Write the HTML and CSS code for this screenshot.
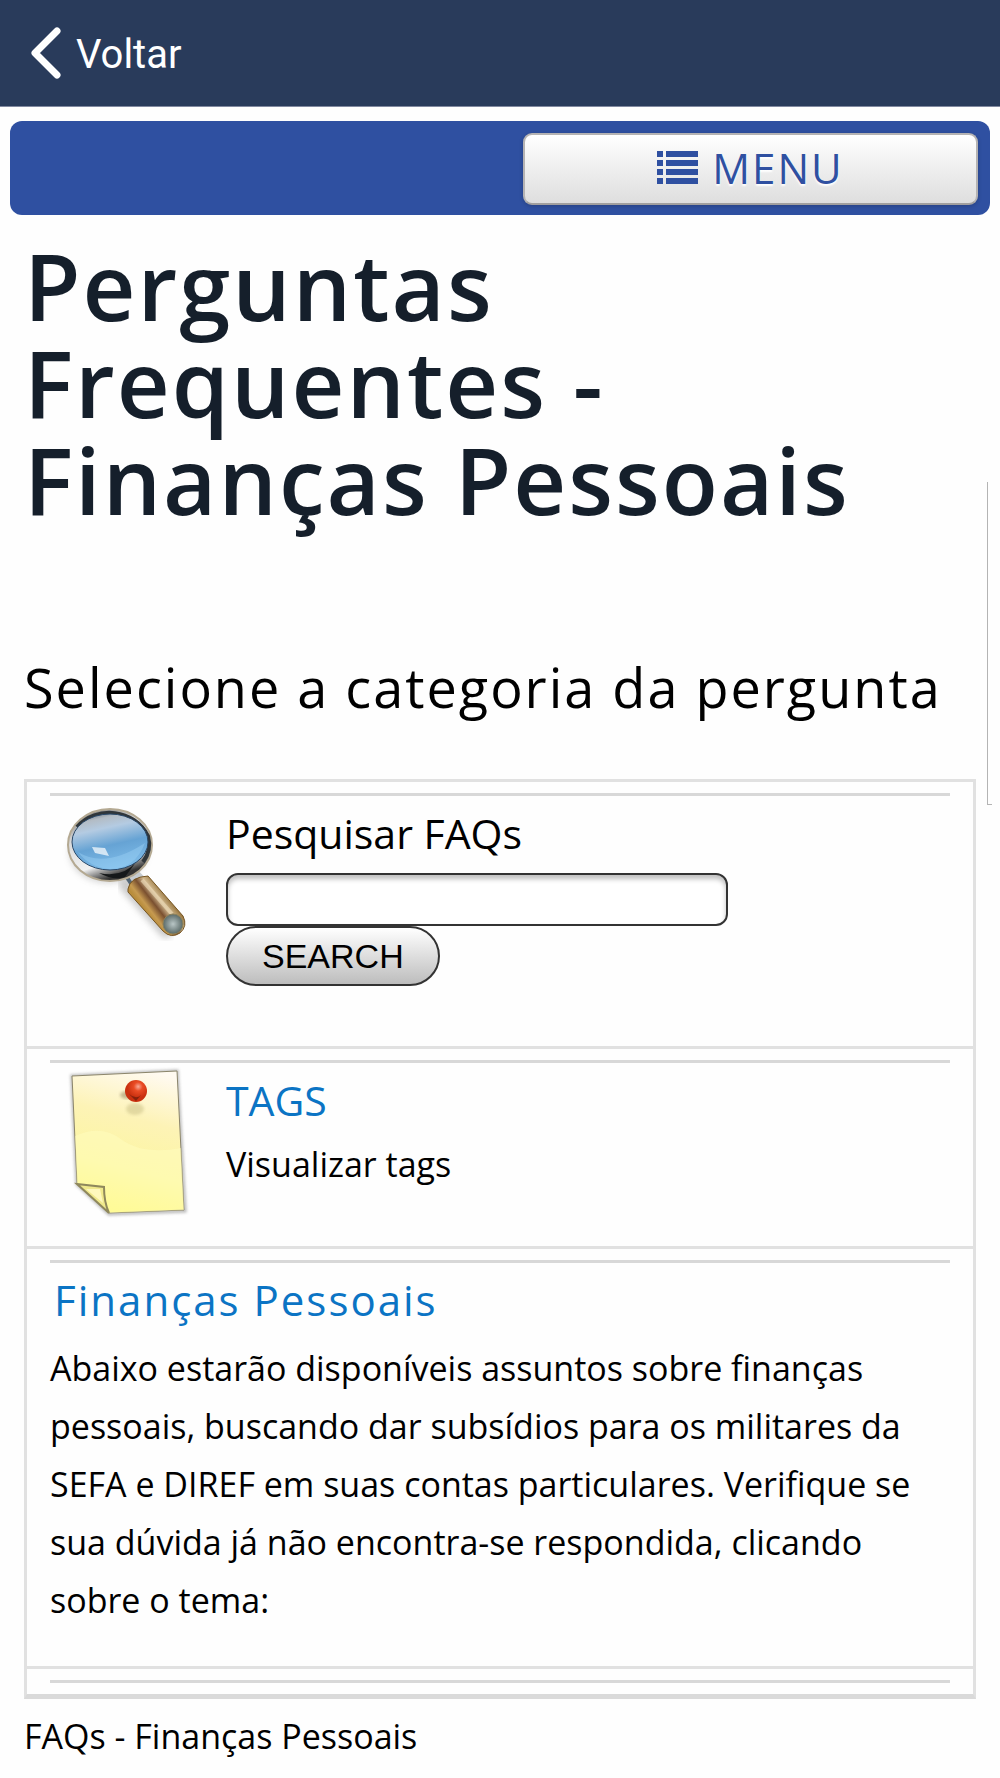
FILE: index.html
```html
<!DOCTYPE html>
<html lang="pt-BR">
<head>
<meta charset="utf-8">
<meta name="viewport" content="width=device-width, initial-scale=1">
<title>Perguntas Frequentes - Finanças Pessoais</title>
<link rel="stylesheet" href="styles.css">
</head>
<body>
<header class="topbar">
  <a class="back" href="#">
    <svg class="back-icon" viewBox="0 0 30 52" aria-hidden="true"><path d="M26 4 4 26 26 48" fill="none" stroke="#fff" stroke-width="7" stroke-linecap="round" stroke-linejoin="round"/></svg>
    <span>Voltar</span>
  </a>
</header>
<nav class="menubar">
  <button class="menu-button" type="button">
    <svg class="menu-icon" viewBox="0 0 41 33" aria-hidden="true"><path fill="#2f50a1" d="M0 0h6v6H0zM9 0h32v6H9zM0 9h6v6H0zM9 9h32v6H9zM0 18h6v6H0zM9 18h32v6H9zM0 27h6v6H0zM9 27h32v6H9z"/></svg>
    <span>MENU</span>
  </button>
</nav>
<main class="content">
  <h1 class="title">Perguntas Frequentes - Finanças Pessoais</h1>
  <h2 class="subtitle">Selecione a categoria da pergunta</h2>
  <div class="panel">
    <section class="row row-search">
      <hr class="rule">
      <div class="entry">
        <svg class="entry-icon" viewBox="0 -3 124 144" aria-hidden="true">
          <defs>
            <linearGradient id="lens" x1=".1" y1="0" x2="0.4" y2="1"><stop offset="0" stop-color="#59626b"/><stop offset=".15" stop-color="#b3bcc5"/><stop offset=".32" stop-color="#b4cbe2"/><stop offset=".62" stop-color="#66a3d4"/><stop offset="1" stop-color="#7dbbe8"/></linearGradient>
            <linearGradient id="rim" x1="0" y1="0" x2=".4" y2="1"><stop offset="0" stop-color="#666"/><stop offset=".4" stop-color="#d9d9d9"/><stop offset=".8" stop-color="#f2f2f2"/><stop offset="1" stop-color="#333"/></linearGradient>
            <linearGradient id="wood" gradientUnits="userSpaceOnUse" x1="79" y1="103" x2="101" y2="86"><stop offset="0" stop-color="#b98d3c"/><stop offset=".15" stop-color="#c69a50"/><stop offset=".4" stop-color="#7a5030"/><stop offset=".65" stop-color="#d3bb92"/><stop offset="1" stop-color="#8b672c"/></linearGradient>
            <radialGradient id="knob"><stop offset="0" stop-color="#b9c6c6"/><stop offset="1" stop-color="#5a6a68"/></radialGradient>
            <filter id="soft" x="-20%" y="-20%" width="140%" height="140%"><feGaussianBlur stdDeviation="3"/></filter>
          </defs>
          <path d="M60 78 100 124" stroke="#999" stroke-width="14" stroke-linecap="round" opacity=".5" filter="url(#soft)"/>
          <ellipse cx="42" cy="45" rx="39" ry="31" fill="#999" opacity=".4" filter="url(#soft)"/>
          <path d="M60 62 74 76" stroke="#c5cbd0" stroke-width="15"/>
          <path d="M58 66 66 78" stroke="#536676" stroke-width="4"/>
          <path d="M62 82Q64 70 82 69L117 109Q122 119 114 126Q105 132 97 124L62 85Z" fill="url(#wood)" stroke="#765522"/>
          <path d="M76 73 106 107" stroke="#f0dfbd" stroke-width="4" opacity=".6"/>
          <circle cx="107" cy="117" r="10" fill="url(#knob)" stroke="#8a815c"/>
          <ellipse cx="44" cy="38" rx="42" ry="36" fill="url(#rim)" stroke="#b4a992" stroke-width="2"/>
          <path d="M11 20C30-2 69 2 82 29Q86 43 77 55" fill="none" stroke="#30363a" stroke-width="4"/>
          <path d="M33 66Q57 71 70 55L59 70Q48 74 33 66Z" fill="#15181a"/>
          <ellipse cx="44" cy="35" rx="38" ry="28" fill="url(#lens)" stroke="#294869"/>
          <path d="M12 45Q39 62 79 36Q69 62 44 62Q23 60 12 45Z" fill="#9fd4f7" opacity=".4"/>
          <path d="M26 40 39 41 43 49 29 46Z" fill="#fff" opacity=".7"/>
        </svg>
        <form class="search" action="#">
          <label class="entry-title" for="faq-search">Pesquisar FAQs</label>
          <input class="search-input" id="faq-search" type="text">
          <button class="search-button" type="submit">SEARCH</button>
        </form>
      </div>
    </section>
    <section class="row row-tags">
      <hr class="rule">
      <div class="entry">
        <svg class="entry-icon" viewBox="0 -1 124 144" aria-hidden="true">
          <defs>
            <linearGradient id="note" x1=".7" y1="0" x2=".5" y2="1"><stop offset="0" stop-color="#fffaf1"/><stop offset=".35" stop-color="#fdf3b6"/><stop offset=".7" stop-color="#fcf6a0"/><stop offset="1" stop-color="#fff86f"/></linearGradient>
            <radialGradient id="pin" cx=".6" cy=".3"><stop offset="0" stop-color="#f8aa98"/><stop offset=".4" stop-color="#ea4c25"/><stop offset="1" stop-color="#c9300f"/></radialGradient>
            <filter id="haze"><feGaussianBlur stdDeviation="1.5"/></filter>
          </defs>
          <path d="M6 4 111 -1 119 139 43 142 11 112Z" fill="none" stroke="#777" stroke-width="3" opacity=".55" filter="url(#haze)"/>
          <path d="M6 4 111 -1 118 138 43 141 11 111Z" fill="url(#note)" stroke="#8b856b"/>
          <path d="M9 64Q36 52 56 68Q77 83 115 76L118 138 43 141 11 111Z" fill="#fffdbf" opacity=".5"/>
          <path d="M11 112 38 115Q38 130 43 141Z" fill="#f0e98c" stroke="#8f885c" stroke-width="2"/>
          <path d="M20 117 34 117 37 131Z" fill="#fff8bd"/>
          <ellipse cx="69" cy="37" rx="9" ry="6" fill="#c7bd82" opacity=".5" filter="url(#haze)"/>
          <ellipse cx="61" cy="23" rx="7" ry="4" fill="#8d7d52" opacity=".5" filter="url(#haze)"/>
          <circle cx="70" cy="19" r="11" fill="url(#pin)"/>
          <path d="M63 22Q70 28 75 23L70 29Z" fill="#681c0b" opacity=".7"/>
        </svg>
        <div class="entry-text">
          <a class="entry-title link" href="#">TAGS</a>
          <p class="text">Visualizar tags</p>
        </div>
      </div>
    </section>
    <section class="row row-topic">
      <hr class="rule">
      <h3 class="topic-title"><a class="link" href="#">Finanças Pessoais</a></h3>
      <p class="text">Abaixo estarão disponíveis assuntos sobre finanças pessoais, buscando dar subsídios para os militares da SEFA e DIREF em suas contas particulares. Verifique se sua dúvida já não encontra-se respondida, clicando sobre o tema:</p>
    </section>
    <section class="row row-empty">
      <hr class="rule">
    </section>
  </div>
  <p class="text closing">FAQs - Finanças Pessoais</p>
</main>
<div class="scroll-thumb" aria-hidden="true"></div>
</body>
</html>
```
FILE: styles.css
```css
* { box-sizing: border-box; }

body {
  margin: 0;
  background: #fefefe;
  color: #000;
  font-family: "Open Sans", sans-serif;
  font-size: 34px;
  line-height: 58px;
}

h1, h2, h3, p { margin: 0; }

.topbar {
  display: flex;
  align-items: center;
  height: 107px;
  padding: 0 30px;
  background: #293b5b;
  border-bottom: 1px solid #8189a0;
}

.back {
  display: flex;
  align-items: center;
  gap: 14px;
  color: #fff;
  font-family: Roboto, sans-serif;
  font-size: 40px;
  line-height: 60px;
  text-decoration: none;
}

.back span { padding-top: 3px; }

.back-icon { width: 32px; height: 52px; }

.menubar {
  display: flex;
  justify-content: flex-end;
  margin: 14px 10px 0;
  padding: 12px 12px 10px;
  background: #2f50a1;
  border-radius: 12px;
}

.menu-button {
  display: flex;
  align-items: center;
  justify-content: center;
  gap: 14px;
  width: 455px;
  max-width: 100%;
  height: 72px;
  padding: 0 0 3px;
  border: 2px solid #b5b3b3;
  border-bottom-color: #a19f9f;
  border-radius: 9px;
  background: linear-gradient(#fff, #dedede);
  box-shadow: 0 1px 4px rgba(0, 0, 0, 0.2);
  color: #2f50a1;
  font: 42px/58px "Open Sans", sans-serif;
  letter-spacing: 2px;
  text-shadow: 0 2px 2px #fff;
}

.menu-icon { width: 41px; height: 33px; }

.content { padding: 22px 24px 14px; }

.title {
  max-width: 860px;
  color: #151f2b;
  font-size: 92px;
  font-weight: 600;
  line-height: 97px;
  letter-spacing: 2px;
}

.subtitle {
  margin: 123px 0 56px;
  font-size: 54px;
  font-weight: 400;
  line-height: 72px;
  letter-spacing: 2px;
}

.panel {
  border: 3px solid #e1e1e1;
  border-bottom: 5px solid #dadada;
}

.row { padding: 11px 23px 0; }
.row + .row { border-top: 3px solid #e1e1e1; }
.row-search { padding-bottom: 60px; }
.row-tags { padding-bottom: 31px; }
.row-topic { padding-bottom: 37px; }
.row-empty { padding-bottom: 3px; }

.rule {
  height: 3px;
  margin: 0 0 8px;
  border: 0;
  background: #d8d8d8;
}

.entry {
  display: flex;
  align-items: flex-start;
  gap: 36px;
}

.entry-icon {
  flex: none;
  width: 124px;
  height: 144px;
  margin-left: 16px;
  overflow: visible;
}

.search, .entry-text {
  display: flex;
  flex: 1;
  flex-direction: column;
  align-items: flex-start;
}

.entry-title { font-size: 41px; }
.entry-text { gap: 6px; }

.search-input {
  width: 502px;
  max-width: 100%;
  height: 53px;
  margin: 11px 0 0;
  padding: 0 12px;
  border: 2px solid #333;
  border-radius: 12px;
  background: #fff;
  box-shadow: inset 0 4px 5px rgba(0, 0, 0, 0.25);
  font: inherit;
}

.search-button {
  height: 60px;
  padding: 0 34px;
  border: 2px solid #333;
  border-radius: 30px;
  background: linear-gradient(#fff, #bdbdbd);
  color: #000;
  font: 34px/40px "Liberation Sans", Arial, sans-serif;
}

.link {
  color: #0b74c4;
  text-decoration: none;
}

.topic-title {
  margin: 0 4px 10px;
  font-size: 42px;
  font-weight: 500;
  letter-spacing: 2px;
}

.closing { margin-top: 8px; }

.scroll-thumb {
  position: absolute;
  top: 482px;
  right: 8px;
  width: 5px;
  height: 323px;
  border: solid #b4b4b4;
  border-width: 0 0 1px 1px;
}
```
